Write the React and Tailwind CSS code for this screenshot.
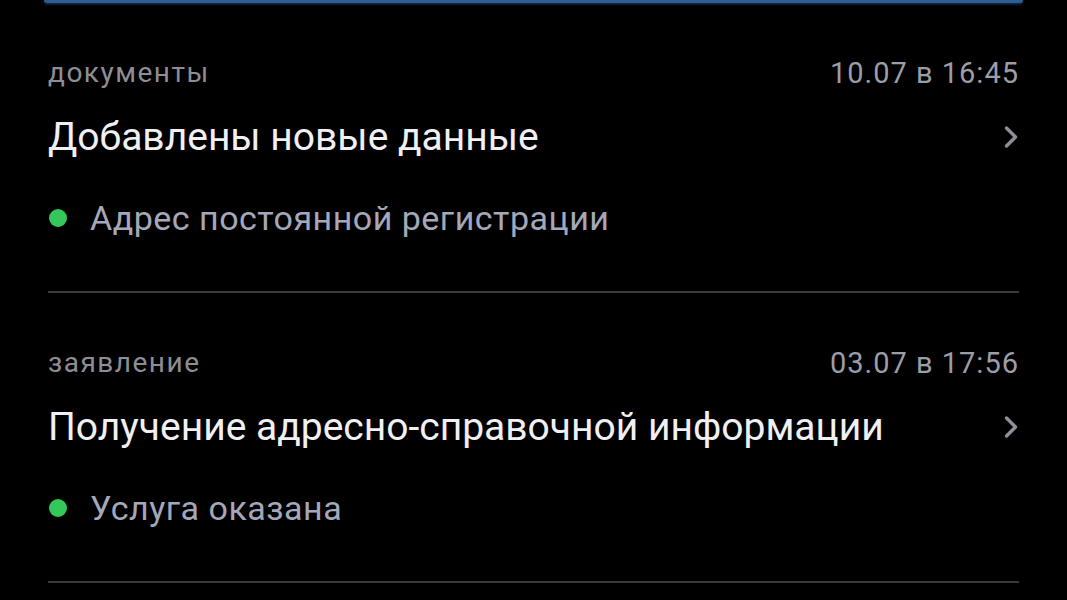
import { ChevronRight } from "lucide-react";

const items = [
  {
    kind: "документы",
    date: "10.07 в 16:45",
    title: "Добавлены новые данные",
    status: "Адрес постоянной регистрации",
  },
  {
    kind: "заявление",
    date: "03.07 в 17:56",
    title: "Получение адресно-справочной информации",
    status: "Услуга оказана",
  },
];

const Feed_item = ({ item }) => {
  return (
    <div className="pt-[54px]">
      <div className="flex items-center justify-between h-[32px]">
        <span className="text-[28px] leading-[32px] tracking-[1.5px] text-[#8d8e94]">
          {item.kind}
        </span>
        <span className="text-[29px] leading-[32px] tracking-[1px] text-[#9c9ea7]">
          {item.date}
        </span>
      </div>
      <div className="mt-[28px] flex items-center justify-between h-[40px]">
        <span className="text-[39px] leading-[40px] text-[#f0f0f3]">
          {item.title}
        </span>
        <ChevronRight
          className="h-[36px] w-[36px] text-[#8e9099] -mr-[10px]"
          strokeWidth={2.3}
        />
      </div>
      <div className="mt-[41px] flex items-center h-[40px]">
        <span className="h-[18px] w-[18px] rounded-full bg-[#34c759] ml-[1px]" />
        <span className="ml-[23px] text-[34px] leading-[40px] tracking-[0.5px] text-[#a4a8b8]">
          {item.status}
        </span>
      </div>
      <div className="mt-[53px] h-[2px] bg-[#3a3a3e]" />
    </div>
  );
};

export default function App() {
  return (
    <div
      className="w-[1067px] h-[600px] overflow-hidden bg-black"
      style={{ fontFamily: "Roboto, 'Noto Sans', sans-serif" }}
    >
      <div className="mx-[44px] h-[3px] rounded-b-[10px] bg-[#2f5d93] shadow-[0_1px_3px_rgba(60,110,170,0.6)]" />
      <div className="px-[48px]">
        {items.map((item, idx) => (
          <Feed_item key={idx} item={item} />
        ))}
      </div>
    </div>
  );
}
